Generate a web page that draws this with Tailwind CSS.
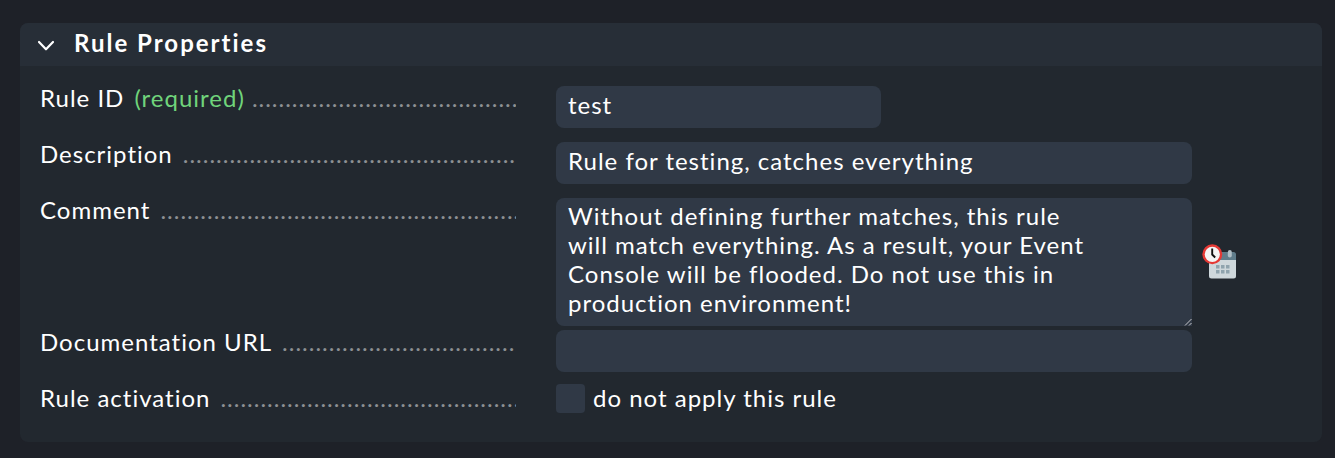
<!DOCTYPE html>
<html lang="en">
<head>
<meta charset="utf-8">
<title>Rule Properties</title>
<script src="https://cdn.jsdelivr.net/npm/@tailwindcss/browser@4"></script>
</head>
<body class="h-[458px] overflow-hidden bg-[#1e2128] pt-[23px] pl-5 font-['Lato',sans-serif] text-[24px] leading-[29px] tracking-[1px] text-white">
<section class="h-[419px] w-[1302px] overflow-hidden rounded-lg bg-[#22282f]">
  <header class="flex h-[43px] items-center bg-[#272e37]">
    <svg class="mt-[2px] ml-[17px] h-[12px] w-[18px]" viewBox="0 0 18 12" fill="none" stroke="#fff" stroke-width="2.2" stroke-linecap="round" stroke-linejoin="round"><path d="M2 2 9 9.3 16 2"/></svg>
    <h2 class="-mt-[4px] ml-[19px] font-bold tracking-[2px]">Rule Properties</h2>
  </header>
  <div class="flex flex-col pl-5">
    <div class="flex h-[56px] pt-[20px]">
      <div class="-mt-[3px] mr-10 flex h-[29px] w-[476px] overflow-hidden whitespace-nowrap"><span class="shrink-0">Rule ID</span><span class="ml-[10px] shrink-0 text-[#70d47b]">(required)</span><span class="ml-[7px] min-w-0 flex-1 overflow-hidden text-[#8d9093]">........................................</span></div>
      <div class="h-[42px] w-[325px] shrink-0 rounded-lg bg-[#303946] px-3 pt-[4px]">test</div>
    </div>
    <div class="flex h-[56px] pt-[20px]">
      <div class="-mt-[3px] mr-10 flex h-[29px] w-[476px] overflow-hidden whitespace-nowrap"><span class="shrink-0">Description</span><span class="ml-[10px] min-w-0 flex-1 overflow-hidden text-[#8d9093]">..................................................</span></div>
      <div class="h-[42px] w-[636px] shrink-0 rounded-lg bg-[#303946] px-3 pt-[4px]">Rule for testing, catches everything</div>
    </div>
    <div class="flex h-[132px] pt-[20px]">
      <div class="-mt-[3px] mr-10 flex h-[29px] w-[476px] overflow-hidden whitespace-nowrap"><span class="shrink-0">Comment</span><span class="ml-[10px] min-w-0 flex-1 overflow-hidden text-[#8d9093]">......................................................</span></div>
      <div class="relative h-[128px] w-[636px] shrink-0 rounded-lg rounded-br-none bg-[#303946] px-3 pt-[3px]">Without defining further matches, this rule<br>will match everything. As a result, your Event<br>Console will be flooded. Do not use this in<br>production environment!
        <svg class="absolute right-0 bottom-0 size-[8px]" viewBox="0 0 8 8" fill="none" stroke="#c5c7ca" stroke-width="1"><path d="M1 7.500 7.500 1M5 7.500 7.500 5"/></svg>
      </div>
      <svg class="mt-[46px] ml-[10px] h-[36px] w-[36px] shrink-0" viewBox="0 0 36 36">
        <path d="M7 14h27v18a2.500 2.500 0 0 1-2.500 2.500h-22a2.500 2.500 0 0 1-2.500-2.500z" fill="#cfd8dc"/>
        <path d="M7 16V10.500a2.500 2.500 0 0 1 2.500-2.500h22a2.500 2.500 0 0 1 2.500 2.500V16z" fill="#607d8b"/>
        <rect x="25.800" y="6" width="4" height="7.500" rx="2" fill="#b0bec5"/>
        <path d="M14 21h3.500v3.500H14zM19 21h3.500v3.500H19zM24 21h3.500v3.500H24zM14 26h3.500v3.500H14zM19 26h3.500v3.500H19zM24 26h3.500v3.500H24z" fill="#90a4ae"/>
        <circle cx="10.300" cy="10.300" r="8.800" fill="#f5f5f5" stroke="#e53935" stroke-width="2.400"/>
        <path d="M10.200 4.500V10.500l3 3" fill="none" stroke="#111" stroke-width="1.900"/>
      </svg>
    </div>
    <div class="flex h-[56px] pt-[20px]">
      <div class="-mt-[3px] mr-10 flex h-[29px] w-[476px] overflow-hidden whitespace-nowrap"><span class="shrink-0">Documentation URL</span><span class="ml-[10px] min-w-0 flex-1 overflow-hidden text-[#8d9093]">...................................</span></div>
      <div class="h-[42px] w-[636px] shrink-0 rounded-lg bg-[#303946]"></div>
    </div>
    <div class="flex h-[56px] pt-[18px]">
      <div class="-mt-px mr-10 flex h-[29px] w-[476px] overflow-hidden whitespace-nowrap"><span class="shrink-0">Rule activation</span><span class="ml-[10px] min-w-0 flex-1 overflow-hidden text-[#8d9093]">.............................................</span></div>
      <div class="h-[29px] w-[29px] shrink-0 rounded bg-[#303946]"></div>
      <span class="-mt-px ml-2">do not apply this rule</span>
    </div>
  </div>
</section>
</body>
</html>
